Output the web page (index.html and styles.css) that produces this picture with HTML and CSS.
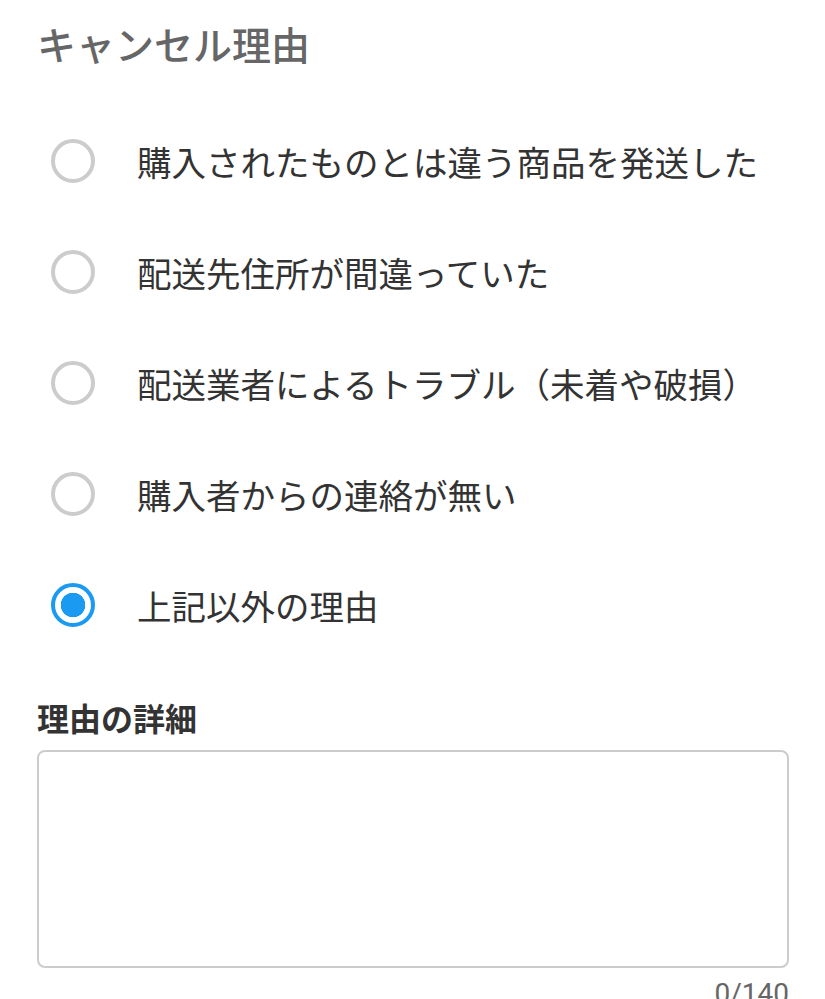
FILE: index.html
```html
<!DOCTYPE html>
<html lang="ja">
<head>
    <meta charset="UTF-8">
    <meta name="viewport" content="width=device-width, initial-scale=1.0">
    <title>キャンセル理由</title>
    <link rel="stylesheet" href="styles.css">
</head>
<body>
    <div class="container">
        <h1 class="title">キャンセル理由</h1>
        <div class="reason-list">
            <label class="reason"><input type="radio" name="reason"><span>購入されたものとは違う商品を発送した</span></label>
            <label class="reason"><input type="radio" name="reason"><span>配送先住所が間違っていた</span></label>
            <label class="reason"><input type="radio" name="reason"><span>配送業者によるトラブル（未着や破損）</span></label>
            <label class="reason"><input type="radio" name="reason"><span>購入者からの連絡が無い</span></label>
            <label class="reason"><input type="radio" name="reason" checked><span>上記以外の理由</span></label>
        </div>
        <h2 class="detail-label">理由の詳細</h2>
        <textarea class="detail-box"></textarea>
        <div class="counter">0/140</div>
    </div>
</body>
</html>
```

FILE: styles.css
```css
body {
    margin: 0;
    padding: 0;
    background-color: #ffffff;
    font-family: "Noto Sans CJK JP", "Noto Sans", sans-serif;
}

.container {
    padding: 20px 36px 0 37px;
}

.title {
    margin: 0;
    font-size: 39px;
    line-height: 46px;
    font-weight: 500;
    color: #666666;
}

.reason-list {
    display: flex;
    flex-direction: column;
    margin-top: 39px;
}

.reason {
    display: flex;
    align-items: center;
    height: 111px;
    font-size: 34.5px;
    color: #333333;
}

.reason input {
    appearance: none;
    -webkit-appearance: none;
    width: 44px;
    height: 44px;
    margin: 0 42px 0 14px;
    border: 4px solid #cccccc;
    border-radius: 50%;
    box-sizing: border-box;
    flex-shrink: 0;
}

.reason input:checked {
    border-color: #1a9af0;
    background: radial-gradient(circle, #1a9af0 0, #1a9af0 12px, transparent 12.5px);
}

.detail-label {
    margin: 37px 0 0 0;
    font-size: 32px;
    line-height: 40px;
    font-weight: 700;
    color: #333333;
}

.detail-box {
    display: block;
    width: 100%;
    height: 218px;
    margin-top: 13px;
    box-sizing: border-box;
    border: 2px solid #cccccc;
    border-radius: 8px;
    resize: none;
    outline: none;
}

.counter {
    margin-top: 8px;
    text-align: right;
    font-family: Roboto, sans-serif;
    font-size: 28px;
    line-height: 36px;
    color: #666666;
}
```
